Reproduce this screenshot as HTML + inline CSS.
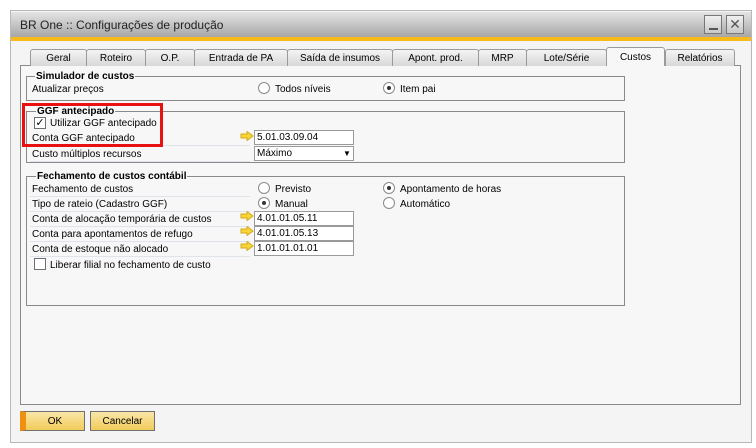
<!DOCTYPE html>
<html><head><meta charset="utf-8"><style>
*{box-sizing:border-box;margin:0;padding:0}
body{width:756px;height:448px;background:#fff;font-family:"Liberation Sans","DejaVu Sans",sans-serif;font-size:10px;color:#000;position:relative;overflow:hidden}
.a{position:absolute;white-space:nowrap}
.t{margin-top:1px}
.win{left:10px;top:10px;width:742px;height:433px;border:1px solid #b8b8b8;background:#f4f4f4}
.title{left:11px;top:12px;width:740px;height:26px;background:linear-gradient(#e4e4e4,#a4a4a4);}
.ybar{left:11px;top:37px;width:740px;height:4px;background:#f8b91a}
.tab{top:49px;height:17px;border:1px solid #9a9a9a;border-bottom:none;border-radius:3px 3px 0 0;background:linear-gradient(#f4f4f4,#d8d8d8);text-align:center;line-height:17px}
.panel{left:20px;top:65px;width:721px;height:340px;border:1px solid #8a8a8a;background:#f7f7f7}
.grp{border:1px solid #8a8a8a}
.gt{font-weight:bold;background:#f7f7f7;padding:0 1px}
.rad{width:12px;height:12px;border:1px solid #8a8a8a;border-radius:50%;background:#fff}
.rad.on::after{content:"";position:absolute;left:3px;top:3px;width:4px;height:4px;border-radius:50%;background:#333}
.inp{height:15px;border:1px solid #9a9a9a;background:#fff;padding-left:2px;line-height:14px;width:100px;left:254px}
.ln{height:1px;background:#dfe3ea;left:30px;width:220px}
.arr{left:240px;width:14px;height:10px}
.btn{top:411px;height:20px;border:1px solid #707070;background:linear-gradient(#f9e6a8,#f2cc5a);text-align:center;line-height:19px}
.cb{width:12px;height:12px;border:1px solid #707070;background:#fff}
</style></head><body>
<svg width="0" height="0" style="position:absolute"><defs><symbol id="ar" viewBox="0 0 14 10"><path d="M1 3h6V0.5L13 5 7 9.5V7H1z" fill="#f5d63a" stroke="#d8a818" stroke-width="1"/></symbol></defs></svg>
<div class="a win"></div>
<div class="a title"></div>
<div class="a" style="left:20px;top:18px;font-size:12px;color:#222">BR One :: Configurações de produção</div>
<div class="a" style="left:704px;top:15px;width:18px;height:19px;border:1px solid #777;background:linear-gradient(#f0f0f0,#c8c8c8)"><div class="a" style="left:4px;top:12px;width:9px;height:2px;background:#555"></div></div>
<div class="a" style="left:726px;top:15px;width:18px;height:19px;border:1px solid #777;background:linear-gradient(#f0f0f0,#c8c8c8);text-align:center;font-size:14px;line-height:17px;color:#555">✕</div>
<div class="a ybar"></div>

<div class="a panel"></div>
<div class="a tab" style="left:30px;width:57px">Geral</div>
<div class="a tab" style="left:86px;width:60px">Roteiro</div>
<div class="a tab" style="left:145px;width:50px">O.P.</div>
<div class="a tab" style="left:194px;width:94px">Entrada de PA</div>
<div class="a tab" style="left:287px;width:106px">Saída de insumos</div>
<div class="a tab" style="left:392px;width:87px">Apont. prod.</div>
<div class="a tab" style="left:478px;width:49px">MRP</div>
<div class="a tab" style="left:526px;width:81px">Lote/Série</div>
<div class="a tab" style="left:606px;top:47px;height:19px;width:59px;background:#f7f7f7;line-height:20px">Custos</div>
<div class="a tab" style="left:665px;width:70px">Relatórios</div>

<div class="a grp" style="left:26px;top:76px;width:599px;height:25px"></div>
<div class="a gt t" style="left:35px;top:70px">Simulador de custos</div>
<div class="a t" style="left:32px;top:83px">Atualizar preços</div>
<div class="a rad" style="left:258px;top:82px"></div><div class="a t" style="left:275px;top:83px">Todos níveis</div>
<div class="a rad on" style="left:383px;top:82px"></div><div class="a t" style="left:400px;top:83px">Item pai</div>

<div class="a grp" style="left:26px;top:111px;width:599px;height:52px"></div>
<div class="a gt t" style="left:36px;top:105px">GGF antecipado</div>
<div class="a cb" style="left:34px;top:117px;font-size:11px;line-height:10px;text-align:center">✓</div>
<div class="a t" style="left:50px;top:117px">Utilizar GGF antecipado</div>
<div class="a t" style="left:32px;top:132px">Conta GGF antecipado</div>
<div class="a ln" style="top:145px"></div>
<svg class="a arr" style="top:131px"><use href="#ar"/></svg>
<div class="a inp" style="top:130px">5.01.03.09.04</div>
<div class="a t" style="left:32px;top:148px">Custo múltiplos recursos</div>
<div class="a ln" style="top:161px"></div>
<div class="a inp" style="top:146px">Máximo<span class="a" style="left:88px;top:0;font-size:8px">▼</span></div>
<div class="a" style="left:22px;top:103px;width:141px;height:44px;border:3px solid #e81010"></div>

<div class="a grp" style="left:26px;top:176px;width:599px;height:130px"></div>
<div class="a gt t" style="left:36px;top:170px">Fechamento de custos contábil</div>
<div class="a t" style="left:32px;top:183px">Fechamento de custos</div><div class="a ln" style="top:196px"></div>
<div class="a rad" style="left:258px;top:182px"></div><div class="a t" style="left:275px;top:183px">Previsto</div>
<div class="a rad on" style="left:383px;top:182px"></div><div class="a t" style="left:400px;top:183px">Apontamento de horas</div>
<div class="a t" style="left:32px;top:198px">Tipo de rateio (Cadastro GGF)</div><div class="a ln" style="top:211px"></div>
<div class="a rad on" style="left:258px;top:197px"></div><div class="a t" style="left:275px;top:198px">Manual</div>
<div class="a rad" style="left:383px;top:197px"></div><div class="a t" style="left:400px;top:198px">Automático</div>
<div class="a t" style="left:32px;top:213px">Conta de alocação temporária de custos</div><div class="a ln" style="top:226px"></div>
<svg class="a arr" style="top:211px"><use href="#ar"/></svg><div class="a inp" style="top:211px">4.01.01.05.11</div>
<div class="a t" style="left:32px;top:228px">Conta para apontamentos de refugo</div><div class="a ln" style="top:241px"></div>
<svg class="a arr" style="top:226px"><use href="#ar"/></svg><div class="a inp" style="top:226px">4.01.01.05.13</div>
<div class="a t" style="left:32px;top:243px">Conta de estoque não alocado</div><div class="a ln" style="top:256px"></div>
<svg class="a arr" style="top:241px"><use href="#ar"/></svg><div class="a inp" style="top:241px">1.01.01.01.01</div>
<div class="a cb" style="left:34px;top:258px"></div>
<div class="a t" style="left:50px;top:259px">Liberar filial no fechamento de custo</div>

<div class="a btn" style="left:20px;width:65px;border-left:6px solid #f09010">OK</div>
<div class="a btn" style="left:90px;width:65px">Cancelar</div>
</body></html>
